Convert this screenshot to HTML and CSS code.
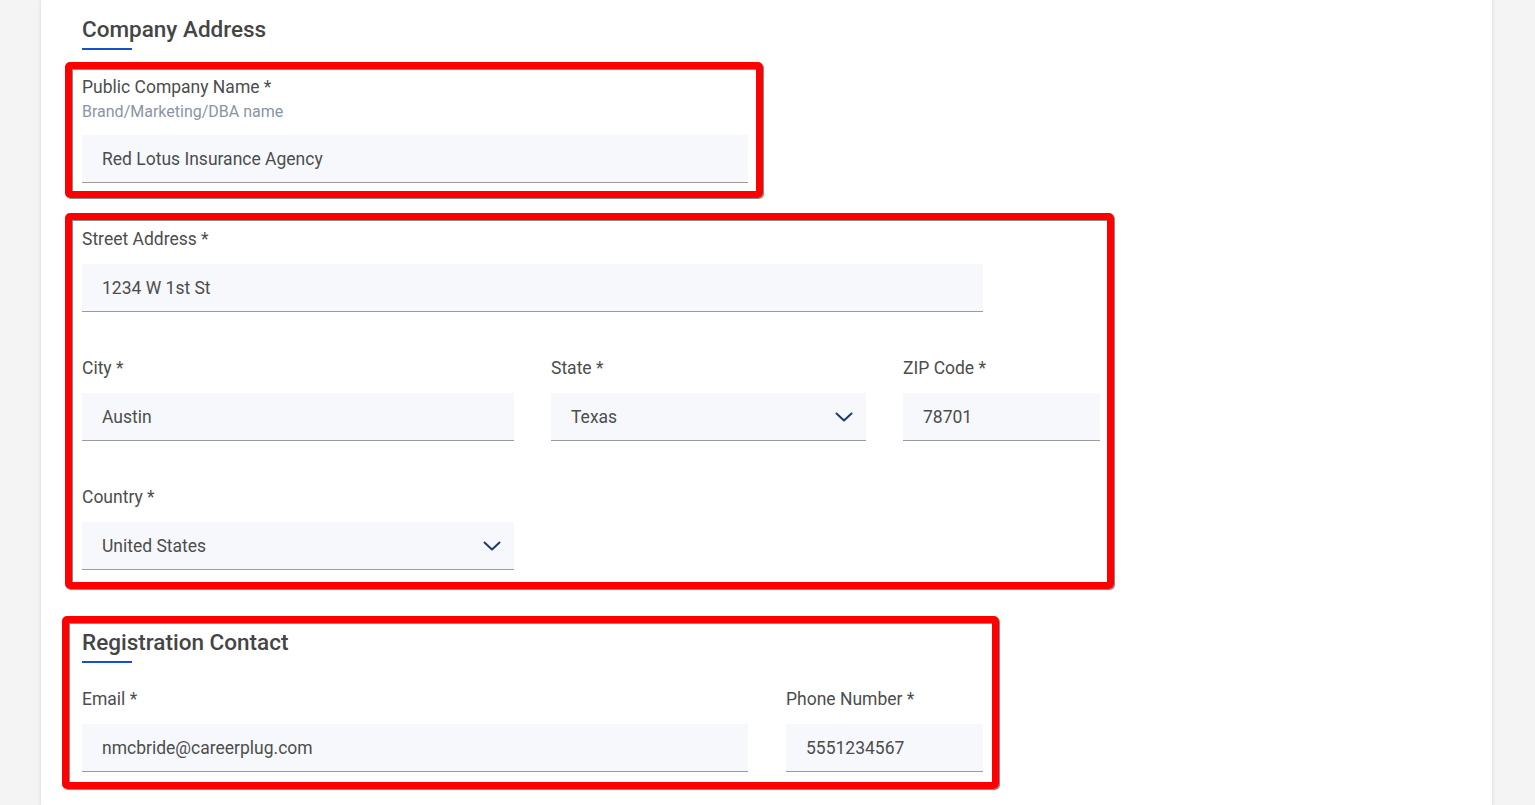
FILE: index.html
```html
<!DOCTYPE html>
<html lang="en">
<head>
<meta charset="utf-8">
<title>Company Address</title>
<link rel="stylesheet" href="styles.css">
</head>
<body>
<div class="page">
  <main class="card">
    <h2 class="section-title">Company Address</h2>

    <div class="group group-name">
      <div class="field w-666">
        <div class="label">Public Company Name *</div>
        <div class="hint">Brand/Marketing/DBA name</div>
        <div class="input">Red Lotus Insurance Agency</div>
      </div>
    </div>

    <div class="group group-address">
      <div class="field w-901 spaced">
        <div class="label">Street Address *</div>
        <div class="input">1234 W 1st St</div>
      </div>
      <div class="row spaced">
        <div class="field w-432">
          <div class="label">City *</div>
          <div class="input">Austin</div>
        </div>
        <div class="field w-315">
          <div class="label">State *</div>
          <div class="input select">
            <span>Texas</span>
            <svg class="chev" width="18" height="10" viewBox="0 0 18 10"><path d="M1.5 1.5 L9 8.5 L16.5 1.5" fill="none" stroke="#1d3a6c" stroke-width="2" stroke-linecap="round" stroke-linejoin="round"/></svg>
          </div>
        </div>
        <div class="field w-197">
          <div class="label">ZIP Code *</div>
          <div class="input">78701</div>
        </div>
      </div>
      <div class="field w-432">
        <div class="label">Country *</div>
        <div class="input select">
          <span>United States</span>
          <svg class="chev" width="18" height="10" viewBox="0 0 18 10"><path d="M1.5 1.5 L9 8.5 L16.5 1.5" fill="none" stroke="#1d3a6c" stroke-width="2" stroke-linecap="round" stroke-linejoin="round"/></svg>
        </div>
      </div>
    </div>

    <div class="group group-contact">
      <h2 class="section-title">Registration Contact</h2>
      <div class="row contact-row">
        <div class="field w-666">
          <div class="label">Email *</div>
          <div class="input">nmcbride@careerplug.com</div>
        </div>
        <div class="field w-197">
          <div class="label">Phone Number *</div>
          <div class="input">5551234567</div>
        </div>
      </div>
    </div>
  </main>
</div>
</body>
</html>
```

FILE: styles.css
```css
* { box-sizing: border-box; }

html, body {
  margin: 0;
  padding: 0;
  height: 805px;
  overflow: hidden;
  background: #f4f4f4;
  font-family: Roboto, "Liberation Sans", Arial, sans-serif;
  color: #4b4b4b;
}

.page {
  display: flex;
  height: 805px;
}

.card {
  margin-left: 41px;
  width: 1451px;
  height: 805px;
  background: #ffffff;
  padding: 15px 0 0 41px;
  box-shadow: 0 0 4px rgba(0, 0, 0, 0.14);
}

.section-title {
  margin: 0;
  font-size: 22.5px;
  line-height: 28px;
  font-weight: 500;
  color: #454545;
  letter-spacing: 0;
}

.section-title::after {
  content: "";
  display: block;
  width: 50px;
  height: 2px;
  margin-top: 5px;
  background: #1253cc;
}

.group {
  position: relative;
}

.group::after {
  content: "";
  position: absolute;
  border: 7px solid #ff0000;
  border-radius: 5px;
  box-shadow: 1px 1px 0 rgba(0, 0, 0, 0.45), inset 1px 1px 0 rgba(0, 0, 0, 0.45);
  pointer-events: none;
}

.group-name {
  width: 666px;
  margin-top: 25px;
  margin-bottom: 44px;
}
.group-name::after { left: -17px; top: -13px; right: -15px; bottom: -15px; }

.group-address {
  width: 1018px;
  margin-bottom: 58px;
}
.group-address::after { left: -17px; top: -14px; right: -14px; bottom: -19px; }

.group-contact {
  width: 901px;
}
.group-contact::after { left: -20px; top: -12px; right: -16px; bottom: -17px; }

.spaced { margin-bottom: 44px; }

.row {
  display: flex;
  gap: 37px;
}

.contact-row {
  margin-top: 24px;
  gap: 38px;
}

.field { display: flex; flex-direction: column; }
.w-666 { width: 666px; }
.w-901 { width: 901px; }
.w-432 { width: 432px; }
.w-315 { width: 315px; }
.w-197 { width: 197px; }

.label {
  font-size: 17.5px;
  line-height: 24px;
  color: #4d4d4d;
}

.hint {
  margin-top: 2px;
  font-size: 16px;
  line-height: 21px;
  color: #8b94a3;
}

.input {
  margin-top: 13px;
  height: 48px;
  padding: 0 20px;
  display: flex;
  align-items: center;
  background: #f7f8fc;
  border-bottom: 1px solid #9b9b9b;
  font-size: 17.5px;
  color: #4d4d4d;
}

.select {
  justify-content: space-between;
  padding-right: 13px;
}

.chev { display: block; margin-top: 1px; }
```
